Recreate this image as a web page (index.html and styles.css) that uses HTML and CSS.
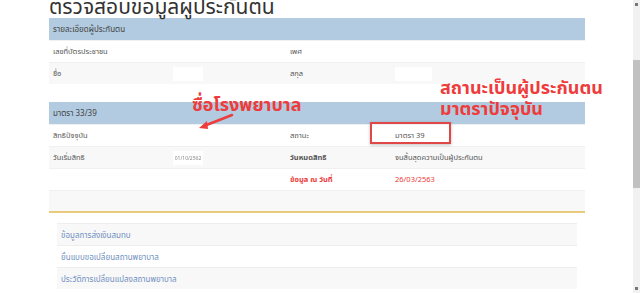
FILE: index.html
```html
<!DOCTYPE html>
<html>
<head>
  <title>ตรวจสอบข้อมูลผู้ประกันตน</title>
  <link rel="stylesheet" href="styles.css">
</head>
<body>
  <div class="page">
    <h1 class="title">ตรวจสอบข้อมูลผู้ประกันตน</h1>

    <div class="table">
      <div class="head">รายละเอียดผู้ประกันตน</div>
      <div class="row">
        <div class="cell">เลขที่บัตรประชาชน</div>
        <div class="cell"></div>
        <div class="cell">เพศ</div>
        <div class="cell"></div>
      </div>
      <div class="row alt">
        <div class="cell">ชื่อ</div>
        <div class="cell"><span class="mask"></span></div>
        <div class="cell">สกุล</div>
        <div class="cell"><span class="mask wide"></span></div>
      </div>
    </div>

    <div class="table second">
      <div class="head">มาตรา 33/39</div>
      <div class="row">
        <div class="cell">สิทธิปัจจุบัน</div>
        <div class="cell"></div>
        <div class="cell">สถานะ</div>
        <div class="cell">มาตรา 39</div>
      </div>
      <div class="row alt">
        <div class="cell">วันเริ่มสิทธิ</div>
        <div class="cell"><span class="mask blur">01/10/2562</span></div>
        <div class="cell bold">วันหมดสิทธิ</div>
        <div class="cell">จนสิ้นสุดความเป็นผู้ประกันตน</div>
      </div>
      <div class="row">
        <div class="cell"></div>
        <div class="cell"></div>
        <div class="cell bold red">ข้อมูล ณ วันที่</div>
        <div class="cell red">26/03/2563</div>
      </div>
      <div class="row alt foot"></div>
    </div>

    <ul class="links">
      <li class="alt">ข้อมูลการส่งเงินสมทบ</li>
      <li>ยื่นแบบขอเปลี่ยนสถานพยาบาล</li>
      <li class="alt">ประวัติการเปลี่ยนแปลงสถานพยาบาล</li>
    </ul>

    <!-- คำอธิบายที่เขียนทับภาพ -->
    <div class="note note-hospital">ซื่อโรงพยาบาล</div>
    <svg class="arrow" width="40" height="20" viewBox="0 0 40 20">
      <path d="M36 3 L8 14" stroke="#ee3b3b" stroke-width="2.5" fill="none" stroke-linecap="round"/>
      <path d="M3 16 L11 9 L12 17 Z" fill="#ee3b3b"/>
    </svg>
    <div class="note note-status">สถานะเป็นผู้ประกันตน</div>
    <div class="note note-status2">มาตราปัจจุบัน</div>
    <div class="box"></div>
  </div>

  <div class="scrollbar">
    <div class="sb-up"></div>
    <div class="sb-thumb"></div>
    <div class="sb-down"></div>
  </div>
</body>
</html>
```

FILE: styles.css
```css
body { margin: 0; font-family: "Noto Sans", "Noto Sans Thai", sans-serif; color: #555; background: #fff; overflow: hidden; }
.page { position: relative; width: 627px; height: 293px; padding-left: 49px; box-sizing: border-box; }
.title { margin: 0; height: 18px; font-size: 21px; font-weight: normal; line-height: 18px; color: #333; position: relative; top: -3px; }

.table { width: 536px; }
.table.second { margin-top: 18px; }
.head { height: 22px; line-height: 22px; padding-left: 4px; background: #b2cbe0; font-size: 8px; color: #444; }
.row { display: grid; grid-template-columns: 120px 117px 105px 194px; height: 22px; border-top: 1px solid #f0f0f0; box-sizing: border-box; }
.row.alt { background: #f8f8f8; }
.cell { padding-left: 4px; font-size: 7.5px; line-height: 21px; color: #555; }
.cell.bold { font-weight: bold; color: #555; }
.cell.red { color: #ee3b3b; }
.row.foot { border-bottom: 2px solid #e9c97c; height: 23px; }

.mask { display: inline-block; width: 30px; height: 14px; background: #fff; vertical-align: middle; font-size: 5px; line-height: 14px; color: #888; text-align: center; }
.mask.wide { width: 37px; }
.mask.blur { filter: blur(0.4px); }

.links { list-style: none; margin: 10px 0 0 8px; padding: 0; width: 520px; }
.links li { height: 22px; line-height: 22px; padding-left: 4px; font-size: 8px; color: #6f8fc0; border-top: 1px solid #eee; box-sizing: border-box; }
.links li.alt { background: #f8f8f8; }

.note { position: absolute; color: #ee3b3b; font-weight: bold; font-size: 18px; line-height: 20px; white-space: nowrap; }
.note-hospital { left: 192px; top: 94px; }
.note-status { left: 440px; top: 77px; }
.note-status2 { left: 440px; top: 98px; }
.arrow { position: absolute; left: 196px; top: 112px; }
.box { position: absolute; left: 370px; top: 122px; width: 81px; height: 22px; border: 2px solid #e04848; box-sizing: border-box; box-shadow: 0 1px 3px rgba(0,0,0,0.25); }

.scrollbar { position: absolute; left: 633px; top: 0; width: 7px; height: 293px; background: #f1f1f1; }
.sb-up, .sb-down { position: absolute; left: 2px; width: 3px; height: 3px; background: #777; }
.sb-up { top: 3px; }
.sb-down { bottom: 3px; }
.sb-thumb { position: absolute; left: 0; top: 60px; width: 7px; height: 128px; background: #c1c1c1; }
```
